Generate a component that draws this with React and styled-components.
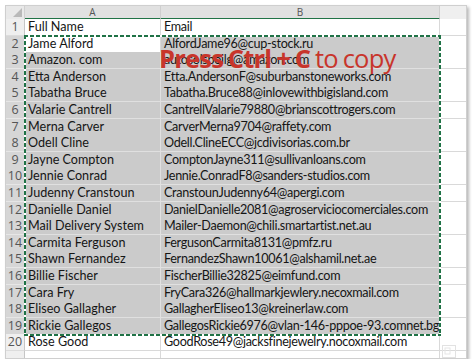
import React from "react";
import styled, { createGlobalStyle } from "styled-components";

const rows = [
  ["Full Name", "Email"],
  ["Jame Alford", "AlfordJame96@cup-stock.ru"],
  ["Amazon. com", "autosolspoilg@amazon.com"],
  ["Etta Anderson", "Etta.AndersonF@suburbanstoneworks.com"],
  ["Tabatha Bruce", "Tabatha.Bruce88@inlovewithbigisland.com"],
  ["Valarie Cantrell", "CantrellValarie79880@brianscottrogers.com"],
  ["Merna Carver", "CarverMerna9704@raffety.com"],
  ["Odell Cline", "Odell.ClineECC@jcdivisorias.com.br"],
  ["Jayne Compton", "ComptonJayne311@sullivanloans.com"],
  ["Jennie Conrad", "Jennie.ConradF8@sanders-studios.com"],
  ["Judenny Cranstoun", "CranstounJudenny64@apergi.com"],
  ["Danielle Daniel", "DanielDanielle2081@agroserviciocomerciales.com"],
  ["Mail Delivery System", "Mailer-Daemon@chili.smartartist.net.au"],
  ["Carmita Ferguson", "FergusonCarmita8131@pmfz.ru"],
  ["Shawn Fernandez", "FernandezShawn10061@alshamil.net.ae"],
  ["Billie Fischer", "FischerBillie32825@eimfund.com"],
  ["Cara Fry", "FryCara326@hallmarkjewlery.necoxmail.com"],
  ["Eliseo Gallagher", "GallagherEliseo13@kreinerlaw.com"],
  ["Rickie Gallegos", "GallegosRickie6976@vlan-146-pppoe-93.comnet.bg"],
  ["Rose Good", "GoodRose49@jacksfinejewelry.nocoxmail.com"],
  ["", ""],
];

const ROW = 16.6;
const rowHeight = (i) => Math.round((i + 1) * ROW) - Math.round(i * ROW);
const isSelected = (n) => n >= 2 && n <= 19;

const App = () => {
  return (
    <>
      <GlobalStyle />
      <Frame>
        <Sheet>
          <HeaderRow>
            <Corner>
              <svg width="9" height="9" viewBox="0 0 9 9">
                <polygon points="9,0 9,9 0,9" fill="#b9b9b9" />
              </svg>
            </Corner>
            <ColHead $sel>A</ColHead>
            <ColHead $sel>B</ColHead>
            <ColHead>C</ColHead>
          </HeaderRow>
          {rows.map((r, i) => {
            const n = i + 1;
            const sel = isSelected(n);
            return (
              <Row key={n} $h={rowHeight(i)}>
                <RowHead $sel={sel}>{n <= 20 ? n : ""}</RowHead>
                <Cell $sel={sel && n !== 2}>{r[0]}</Cell>
                <Cell $sel={sel} $tight>{r[1]}</Cell>
                <Cell />
              </Row>
            );
          })}
          <Marquee />
          <Hint>
            <strong>Press Ctrl + C</strong> to copy
          </Hint>
          <QuickBtn>
            <svg width="14" height="13" viewBox="0 0 14 13">
              <rect x="0.5" y="0.5" width="13" height="12" fill="none" stroke="#e2e2e2" />
              <rect x="3" y="3" width="5" height="6" fill="none" stroke="#e6e6e6" />
            </svg>
          </QuickBtn>
        </Sheet>
      </Frame>
    </>
  );
};

const GlobalStyle = createGlobalStyle`
  body {
    margin: 0;
    background: #ffffff;
    font-family: "Lato", "Open Sans", sans-serif;
  }
`;

const Frame = styled.div`
  margin: 5px 0 0 5px;
  width: 460px;
  height: 352px;
  border: 1px solid #cfcfcf;
  box-shadow: 2px 2px 3px rgba(0, 0, 0, 0.28);
  background: #fff;
  overflow: hidden;
`;

const Sheet = styled.div`
  position: relative;
  width: 520px;
`;

const cols = "19px 136px 279px 70px";

const HeaderRow = styled.div`
  display: grid;
  grid-template-columns: ${cols};
  height: 13px;
`;

const Corner = styled.div`
  background: #e9e9e9;
  border-right: 1px solid #d0d0d0;
  border-bottom: 1px solid #c8c8c8;
  display: flex;
  align-items: flex-end;
  justify-content: flex-end;
  padding: 0 2px 2px 0;
  box-sizing: border-box;
`;

const ColHead = styled.div`
  background: ${(p) => (p.$sel ? "#e1e1e1" : "#efefef")};
  border-right: 1px solid #cfcfcf;
  border-bottom: ${(p) => (p.$sel ? "2px solid #217346" : "1px solid #c8c8c8")};
  box-sizing: border-box;
  font-family: "Open Sans", sans-serif;
  font-size: 10px;
  line-height: 12px;
  color: #555;
  text-align: center;
`;

const Row = styled.div`
  display: grid;
  grid-template-columns: ${cols};
  height: ${(p) => p.$h}px;
`;

const RowHead = styled.div`
  background: ${(p) => (p.$sel ? "#d6d6d6" : "#efefef")};
  border-right: 1px solid ${(p) => (p.$sel ? "#217346" : "#c6c6c6")};
  border-bottom: 1px solid ${(p) => (p.$sel ? "#e6e6e6" : "#dcdcdc")};
  box-sizing: border-box;
  font-family: "Open Sans", sans-serif;
  font-size: 12.5px;
  line-height: 16px;
  color: #555;
  text-align: center;
`;

const Cell = styled.div`
  background: ${(p) => (p.$sel ? "#cbcbcb" : "#ffffff")};
  border-right: 1px solid ${(p) => (p.$sel ? "#e0e0e0" : "#d9d9d9")};
  border-bottom: 1px solid ${(p) => (p.$sel ? "#e0e0e0" : "#d9d9d9")};
  box-sizing: border-box;
  padding-left: 3px;
  font-size: 12.6px;
  letter-spacing: ${(p) => (p.$tight ? "-0.3px" : "0")};
  line-height: 16px;
  color: #151515;
  white-space: nowrap;
  overflow: hidden;
`;

const dashH = "repeating-linear-gradient(90deg, #1f7246 0 4px, #ffffff 4px 6px)";
const dashV = "repeating-linear-gradient(180deg, #1f7246 0 4px, #ffffff 4px 6px)";

const Marquee = styled.div`
  position: absolute;
  left: 18px;
  top: 29px;
  width: 417px;
  height: 301px;
  pointer-events: none;
  background: ${dashH} top left / 100% 2px no-repeat, ${dashH} bottom left / 100% 2px no-repeat,
    ${dashV} top left / 2px 100% no-repeat, ${dashV} top right / 2px 100% no-repeat;
`;

const Hint = styled.div`
  position: absolute;
  left: 153px;
  top: 35px;
  font-family: "Open Sans", sans-serif;
  font-size: 25.5px;
  color: #c8352b;
  white-space: nowrap;
  letter-spacing: -0.8px;
  word-spacing: -1px;

  strong {
    font-weight: 700;
  }
`;

const QuickBtn = styled.div`
  position: absolute;
  left: 436px;
  top: 336px;
`;

export default App;
